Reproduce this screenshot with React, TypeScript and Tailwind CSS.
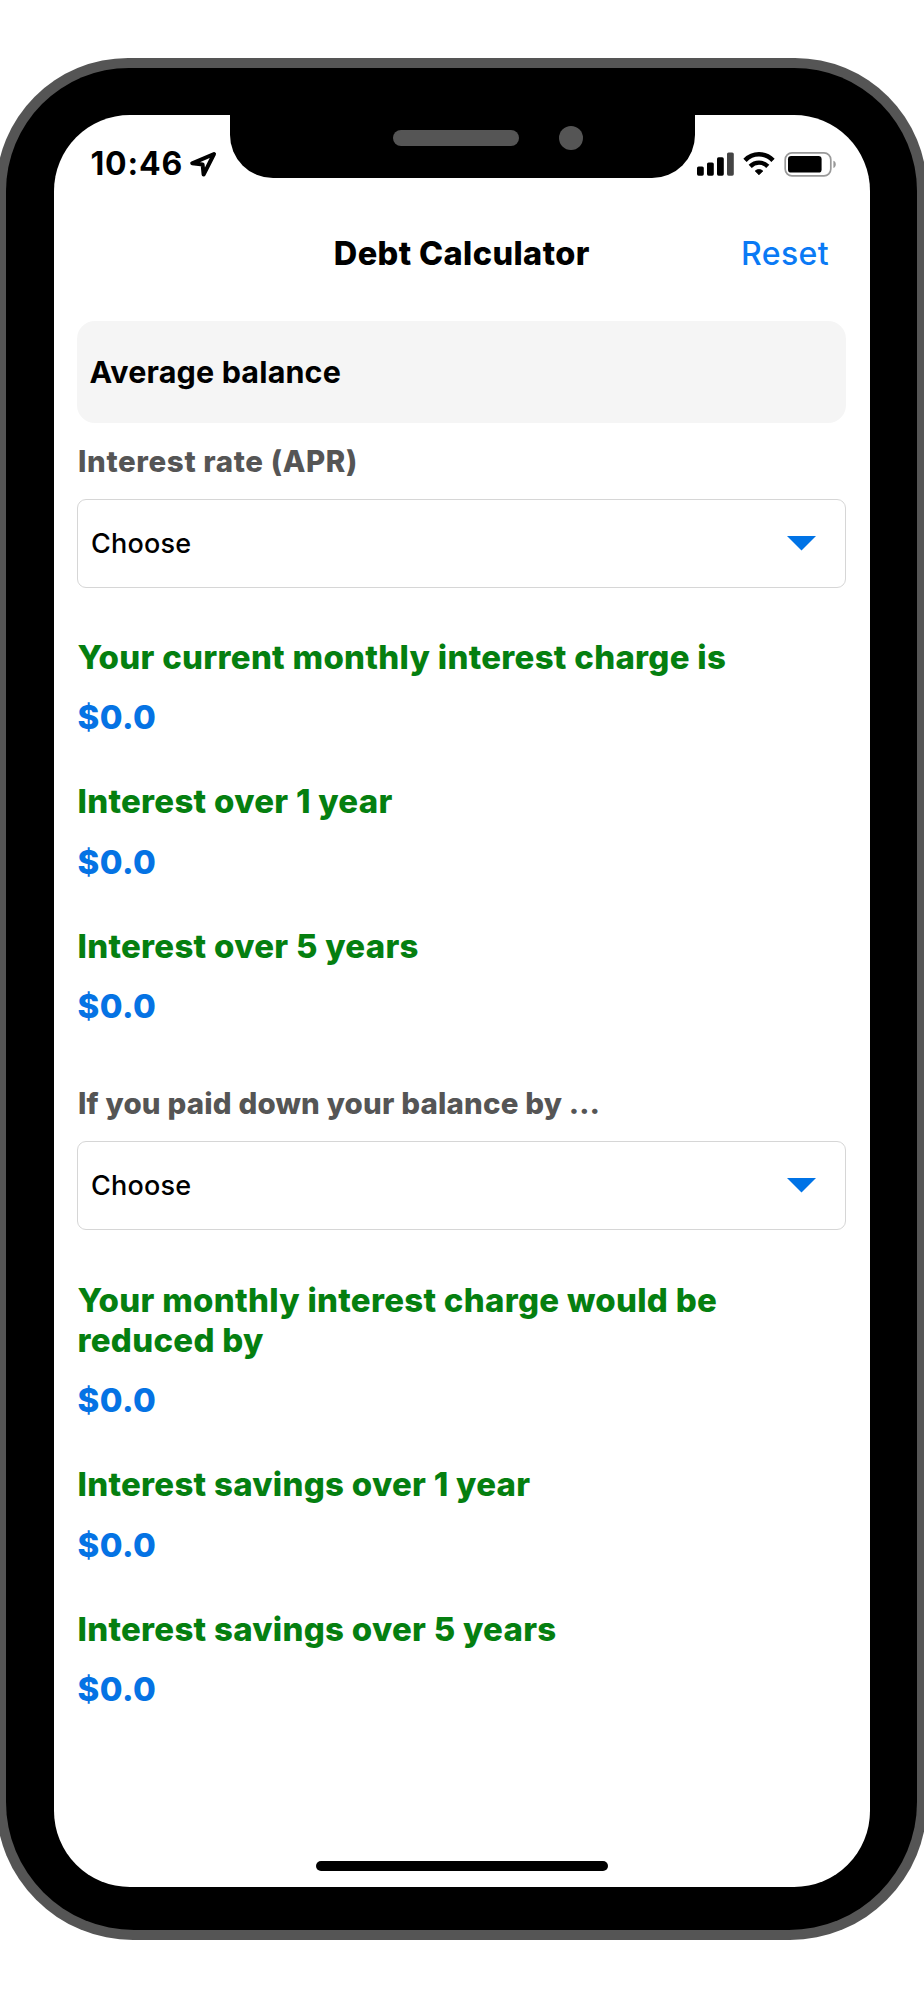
import React from 'react';

function LocationIcon() {
  return (
    <svg className="h-[26px] w-[28px]" viewBox="0 0 28 26" fill="none">
      <path
        d="M25 3 L3.2 12.3 L13.6 13.4 L14.6 23.6 Z"
        stroke="#000"
        strokeWidth="4"
        strokeLinejoin="round"
      />
    </svg>
  );
}

function SignalIcon() {
  return (
    <svg className="h-[24px] w-[37px]" viewBox="0 0 37 24">
      <rect x="0" y="14.5" width="6.8" height="9.2" rx="1.6" />
      <rect x="10" y="10.5" width="6.8" height="13.2" rx="1.6" />
      <rect x="20" y="5.3" width="6.8" height="18.4" rx="1.6" />
      <rect x="30" y="0.5" width="6.8" height="23.2" rx="1.6" fill="#444" />
    </svg>
  );
}

function WifiIcon() {
  return (
    <svg className="h-[24px] w-[32px]" viewBox="0 0 32 24" fill="none" stroke="#000">
      <path d="M2 8.3 C9.8 0.3 22.2 0.3 30 8.3" strokeWidth="4.6" />
      <path d="M7.2 14.4 C12.2 9.4 19.8 9.4 24.8 14.4" strokeWidth="4.4" />
      <path
        d="M16 22.8 L12.2 19 C14.3 17.1 17.7 17.1 19.8 19 Z"
        fill="#000"
        strokeWidth="0.8"
        strokeLinejoin="round"
      />
    </svg>
  );
}

function BatteryIcon() {
  return (
    <svg className="h-[25px] w-[53px]" viewBox="0 0 53 25">
      <rect x="1.2" y="0.9" width="45.6" height="23" rx="6.8" fill="none" stroke="#999" strokeWidth="1.7" />
      <rect x="4" y="4" width="33.6" height="16.6" rx="3.2" />
      <path d="M49.4 8.8 C52.6 9.6 52.6 15.2 49.4 16 Z" fill="#999" />
    </svg>
  );
}

function StatusBar() {
  return (
    <div className="flex h-[98px] items-center justify-between pr-[33px] pl-[37px]">
      <div className="flex items-center gap-[6px]">
        <span className="text-[32px] leading-[40px] font-bold tracking-[0.8px]">10:46</span>
        <LocationIcon />
      </div>
      <div className="flex items-center">
        <SignalIcon />
        <span className="w-[9.5px]" />
        <WifiIcon />
        <span className="w-[9px]" />
        <BatteryIcon />
      </div>
    </div>
  );
}

function Notch() {
  return (
    <div className="absolute top-[-1px] left-[176px] flex h-[64px] w-[465.5px] rounded-b-[43px] bg-black">
      <div className="mt-[16px] ml-[163px] h-[16px] w-[126.5px] rounded-full bg-[#555]" />
      <div className="mt-[12px] ml-[39.5px] size-[24px] rounded-full bg-[#555]" />
    </div>
  );
}

function Label({ children }: { children: React.ReactNode }) {
  return <div className="flex h-[76px] items-center pl-px text-[29.5px] font-extrabold text-[#555]">{children}</div>;
}

function Select() {
  return (
    <button className="flex h-[89px] w-full items-center justify-between rounded-[9px] border border-[#d6d6d6] pr-[29px] pl-[13px]">
      <span className="text-[27px] leading-[40px] font-medium tracking-[0.2px]">Choose</span>
      <svg className="h-[15px] w-[29px]" viewBox="0 0 29 15">
        <path d="M0 0 H29 L14.5 14.5 Z" fill="#0073e6" />
      </svg>
    </button>
  );
}

function Results({ titles }: { titles: string[] }) {
  return (
    <div className="flex flex-col gap-[44.1px] pl-[0.5px] text-[33px] leading-[40px] font-extrabold">
      {titles.map((title) => (
        <div key={title} className="flex flex-col gap-[20.3px]">
          <h2 className="tracking-[0.28px] text-[#057f10]">{title}</h2>
          <p className="tracking-[0.4px] text-[#0573e4]">$0.0</p>
        </div>
      ))}
    </div>
  );
}

export default function App() {
  return (
    <div className="h-[2000px] w-[924px] overflow-hidden bg-white pt-[58px] font-['Inter',sans-serif] text-black">
      <div className="-ml-[4px] h-[1882px] w-[931px] rounded-t-[132px] rounded-b-[137px] bg-[#555] p-[10px]">
        <div className="h-[1862px] w-[911px] rounded-t-[123px] rounded-b-[128px] bg-black pt-[47px] pl-[47.5px]">
          <div className="relative flex h-[1771.5px] w-[816.5px] flex-col rounded-[76px] bg-white">
            <Notch />
            <StatusBar />
            <header className="grid h-[81px] grid-cols-[1fr_auto_1fr] items-center pr-[41px] pl-[41px]">
              <span />
              <h1 className="text-[32.5px] leading-[40px] font-extrabold tracking-[0.4px]">Debt Calculator</h1>
              <button className="justify-self-end text-[32px] leading-[40px] font-medium tracking-[0.4px] text-[#0a7af5]">
                Reset
              </button>
            </header>
            <main className="flex flex-1 flex-col pt-[27px] pr-[24px] pl-[23.5px]">
              <div className="flex h-[102px] items-center rounded-[18px] bg-[#f5f5f5] pl-[12.5px] text-[30.5px] font-bold tracking-[0.15px]">
                Average balance
              </div>
              <Label>
                <span className="tracking-[0.62px]">Interest rate (APR)</span>
              </Label>
              <Select />
              <div className="h-[49px]" />
              <Results
                titles={[
                  'Your current monthly interest charge is',
                  'Interest over 1 year',
                  'Interest over 5 years',
                ]}
              />
              <div className="h-[39.3px]" />
              <Label>
                <span className="tracking-[0.18px]">If you paid down your balance by …</span>
              </Label>
              <Select />
              <div className="h-[49.7px]" />
              <Results
                titles={[
                  'Your monthly interest charge would be reduced by',
                  'Interest savings over 1 year',
                  'Interest savings over 5 years',
                ]}
              />
            </main>
            <div className="mb-[15.5px] h-[10px] w-[292px] self-center rounded-full bg-black" />
          </div>
        </div>
      </div>
    </div>
  );
}
